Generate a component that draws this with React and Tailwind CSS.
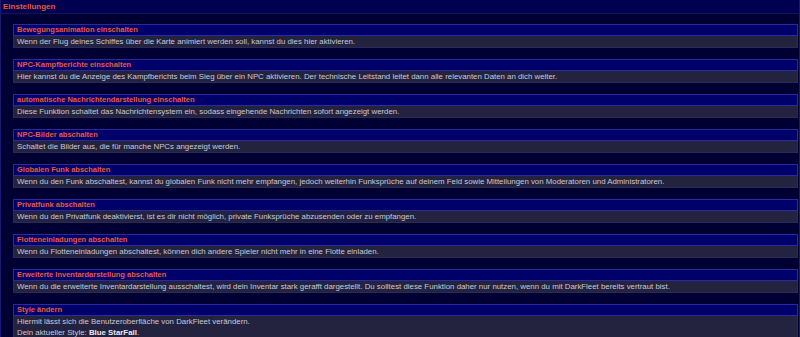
import React from 'react';

const sections = [
  {
    title: 'Bewegungsanimation einschalten',
    text: 'Wenn der Flug deines Schiffes über die Karte animiert werden soll, kannst du dies hier aktivieren.'
  },
  {
    title: 'NPC-Kampfberichte einschalten',
    text: 'Hier kannst du die Anzeige des Kampfberichts beim Sieg über ein NPC aktivieren. Der technische Leitstand leitet dann alle relevanten Daten an dich weiter.'
  },
  {
    title: 'automatische Nachrichtendarstellung einschalten',
    text: 'Diese Funktion schaltet das Nachrichtensystem ein, sodass eingehende Nachrichten sofort angezeigt werden.'
  },
  {
    title: 'NPC-Bilder abschalten',
    text: 'Schaltet die Bilder aus, die für manche NPCs angezeigt werden.'
  },
  {
    title: 'Globalen Funk abschalten',
    text: 'Wenn du den Funk abschaltest, kannst du globalen Funk nicht mehr empfangen, jedoch weiterhin Funksprüche auf deinem Feld sowie Mitteilungen von Moderatoren und Administratoren.'
  },
  {
    title: 'Privatfunk abschalten',
    text: 'Wenn du den Privatfunk deaktivierst, ist es dir nicht möglich, private Funksprüche abzusenden oder zu empfangen.'
  },
  {
    title: 'Flotteneinladungen abschalten',
    text: 'Wenn du Flotteneinladungen abschaltest, können dich andere Spieler nicht mehr in eine Flotte einladen.'
  },
  {
    title: 'Erweiterte Inventardarstellung abschalten',
    text: 'Wenn du die erweiterte Inventardarstellung ausschaltest, wird dein Inventar stark gerafft dargestellt. Du solltest diese Funktion daher nur nutzen, wenn du mit DarkFleet bereits vertraut bist.'
  }
];

const Section = ({ title, children }) => (
  <div className="flex flex-col">
    <div className="h-[12px] bg-[#00006a] border border-[#2a2a9a] pl-[3px] text-[7.5px] leading-[10px] font-bold text-[#e85a3a]">
      {title}
    </div>
    <div className="bg-[#23233f] border-x border-b border-[#2a2a55] pl-[3px] text-[7.85px] leading-[11px] text-[#c8c8d8]">
      {children}
    </div>
  </div>
);

const App = () => {
  return (
    <div
      className="w-[800px] h-[337px] overflow-hidden bg-[#000033] border-l border-r border-[#1a1a70] flex flex-col"
      style={{ fontFamily: '"Liberation Sans", Arial, sans-serif' }}
    >
      <div className="h-[14px] shrink-0 bg-[#000050] border-b border-[#14145a] pl-[2px] text-[8px] leading-[13px] font-bold text-[#e85a3a]">
        Einstellungen
      </div>
      <div className="flex flex-col gap-[11px] pt-[10px] pl-[12px] pr-[1px]">
        {sections.map(s => (
          <Section key={s.title} title={s.title}>
            {s.text}
          </Section>
        ))}
        <Section title="Style ändern">
          Hiermit lässt sich die Benutzeroberfläche von DarkFleet verändern.
          <br />
          Dein aktueller Style: <span className="font-bold text-[#e8e8f0]">Blue StarFall</span>.
        </Section>
      </div>
    </div>
  );
};

export default App;
